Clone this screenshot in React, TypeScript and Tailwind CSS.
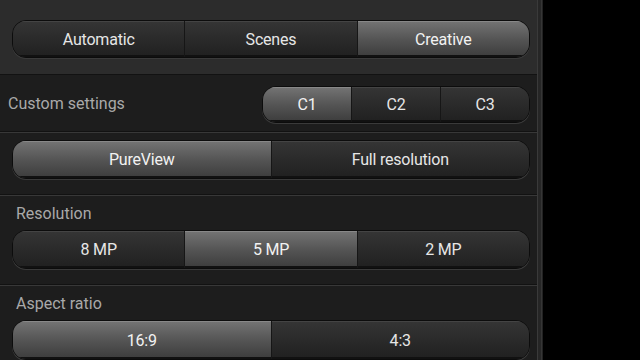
import React, { useState } from "react";

const font = { fontFamily: "Roboto, 'Liberation Sans', sans-serif" };

function Segmented({
  options,
  value,
  onChange,
  className,
}: {
  options: string[];
  value: string;
  onChange: (v: string) => void;
  className?: string;
}) {
  return (
    <div
      className={
        "flex rounded-[14px] border border-[#0c0c0c] bg-[#1f1f1f] shadow-[0_1px_0_#3a3a3a] overflow-hidden " +
        (className ?? "")
      }
    >
      {options.map((opt, i) => {
        const active = opt === value;
        return (
          <button
            key={opt}
            onClick={() => onChange(opt)}
            className={
              "flex-1 flex items-center justify-center pt-[1px] text-[16px] tracking-[-0.2px] " +
              (i > 0 ? "border-l border-[#161616] " : "") +
              (active
                ? "bg-gradient-to-b from-[#747474] via-[#555555] to-[#3c3c3c] text-[#f2f2f2] shadow-[inset_0_1px_0_#888,inset_0_-2px_0_#111]"
                : "bg-gradient-to-b from-[#353535] to-[#202020] text-[#e6e6e6] shadow-[inset_0_1px_0_#444,inset_0_-2px_0_#111]")
            }
          >
            {opt}
          </button>
        );
      })}
    </div>
  );
}

export default function App() {
  const [mode, setMode] = useState("Creative");
  const [custom, setCustom] = useState("C1");
  const [view, setView] = useState("PureView");
  const [res, setRes] = useState("5 MP");
  const [aspect, setAspect] = useState("16:9");

  return (
    <div className="w-[640px] h-[360px] bg-black flex overflow-hidden" style={font}>
      <div className="w-[537px] flex flex-col bg-[#1d1d1d]">
        {/* Mode */}
        <div className="h-[75px] bg-[#2c2c2c] pl-[12px] pr-[7px] pt-[20px] border-b border-[#121212]">
          <Segmented
            className="h-[38px]"
            options={["Automatic", "Scenes", "Creative"]}
            value={mode}
            onChange={setMode}
          />
        </div>

        {/* Custom settings */}
        <div className="h-[57px] flex items-center justify-between pl-[8px] pr-[7px] border-b border-[#121212] shadow-[0_1px_0_#383838]">
          <span className="text-[16px] text-[#a9a9a9] pt-[2px]">Custom settings</span>
          <Segmented
            className="w-[268px] h-[37px] mt-[2px]"
            options={["C1", "C2", "C3"]}
            value={custom}
            onChange={setCustom}
          />
        </div>

        {/* PureView */}
        <div className="h-[63px] pl-[12px] pr-[7px] pt-[8px] border-b border-[#121212] shadow-[0_1px_0_#383838]">
          <Segmented
            className="h-[39px]"
            options={["PureView", "Full resolution"]}
            value={view}
            onChange={setView}
          />
        </div>

        {/* Resolution */}
        <div className="h-[90px] pl-[12px] pr-[7px] pt-[9px] border-b border-[#121212] shadow-[0_1px_0_#383838]">
          <div className="pl-[4px] text-[16px] text-[#a9a9a9] leading-[20px]">Resolution</div>
          <Segmented
            className="h-[39px] mt-[6px]"
            options={["8 MP", "5 MP", "2 MP"]}
            value={res}
            onChange={setRes}
          />
        </div>

        {/* Aspect ratio */}
        <div className="flex-1 pl-[12px] pr-[7px] pt-[9px]">
          <div className="pl-[4px] text-[16px] text-[#a9a9a9] leading-[20px]">Aspect ratio</div>
          <Segmented
            className="h-[40px] mt-[6px]"
            options={["16:9", "4:3"]}
            value={aspect}
            onChange={setAspect}
          />
        </div>
      </div>
      {/* scroll track */}
      <div className="w-[6px] h-full flex bg-[#222]">
        <div className="w-[1px] bg-[#3a3a3a]" />
        <div className="w-[3px] bg-[#262626]" />
        <div className="w-[1px] bg-[#353535]" />
      </div>
    </div>
  );
}
